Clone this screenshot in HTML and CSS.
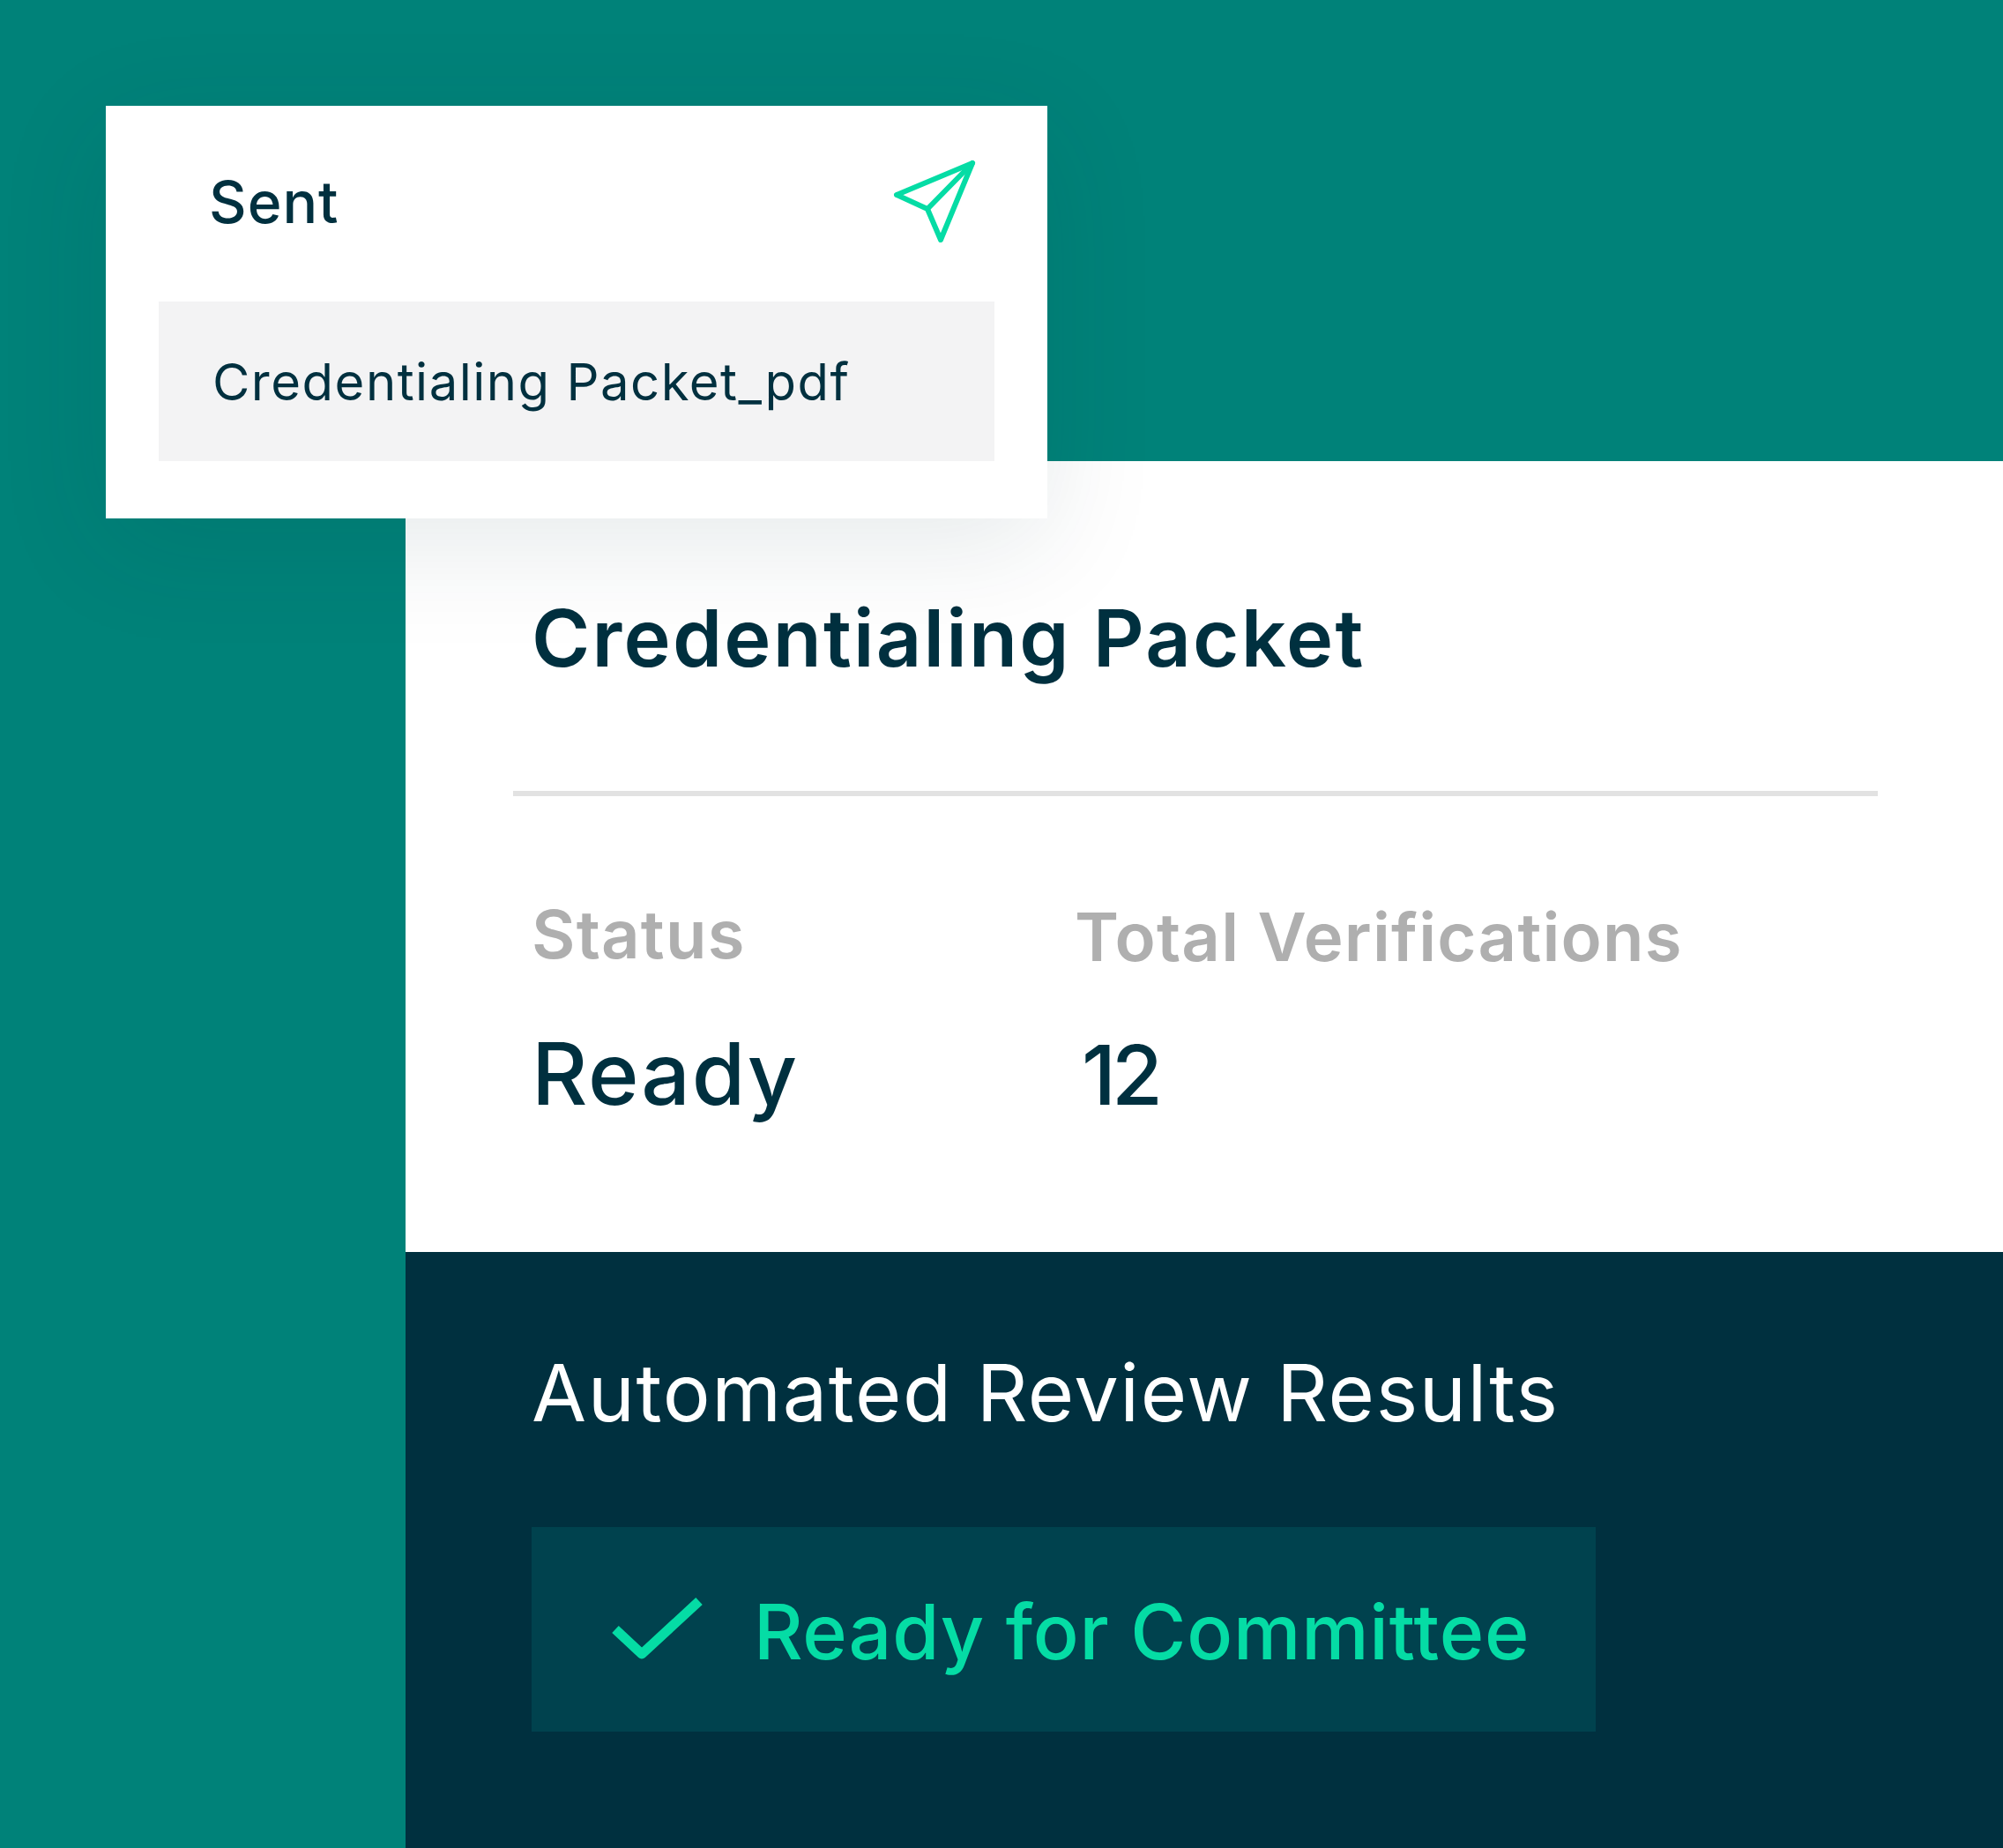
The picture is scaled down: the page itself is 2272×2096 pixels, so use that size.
FILE: index.html
```html
<!DOCTYPE html>
<html lang="en">
<head>
  <meta charset="UTF-8" />
  <title>Credentialing Packet</title>
  <link rel="stylesheet" href="styles.css">
</head>
<body>

  <!-- Sent popup, lies over the panel -->
  <div class="sent-card">
    <div class="sent-head">
      <span class="sent-title">Sent</span>
      <svg class="sent-icon" viewBox="0 0 100 100" fill="none" stroke="#05dca5" stroke-width="6" stroke-linejoin="round" stroke-linecap="round">
        <path d="M94 10 8 46 43 62 58 97Z" />
        <path d="M43 62 94 10" />
      </svg>
    </div>
    <div class="sent-file">Credentialing Packet_pdf</div>
  </div>

  <div class="panel">
    <div class="packet">
      <h1 class="packet-title">Credentialing Packet</h1>
      <div class="divider"></div>
      <div class="stats">
        <div class="stat stat-status">
          <div class="stat-label">Status</div>
          <div class="stat-value">Ready</div>
        </div>
        <div class="stat stat-total">
          <div class="stat-label">Total Verifications</div>
          <div class="stat-value">12</div>
        </div>
      </div>
    </div>

    <div class="review">
      <h2 class="review-title">Automated Review Results</h2>
      <div class="review-badge">
        <svg class="check-icon" viewBox="0 0 110 80" fill="none" stroke="#05dca5" stroke-width="11" stroke-linejoin="round">
          <path d="M8 37 38 65 103 5" />
        </svg>
        <span class="badge-text">Ready for Committee</span>
      </div>
    </div>
  </div>

</body>
</html>
```

FILE: styles.css
```css
body {
  margin: 0;
  height: 2096px;
  overflow: hidden;
  background-color: #008279;
  font-family: Inter, "Noto Sans", sans-serif;
  color: #00303f;
  position: relative;
}

/* Popup */
.sent-card {
  position: absolute;
  top: 120px;
  left: 120px;
  width: 1068px;
  height: 468px;
  box-sizing: border-box;
  padding: 0 60px;
  background: white;
  box-shadow: 0 30px 120px rgba(0, 48, 63, 0.1);
  z-index: 10;
}

.sent-head {
  height: 222px;
  display: flex;
  justify-content: space-between;
  align-items: flex-start;
}

.sent-title {
  margin: 76px 0 0 57px;
  font-size: 66px;
  font-weight: 500;
  line-height: 1;
  letter-spacing: 1px;
}

.sent-icon {
  width: 100px;
  height: 100px;
  margin: 55px 19px 0 0;
}

.sent-file {
  height: 181px;
  display: flex;
  align-items: center;
  padding-left: 61px;
  background: #f3f3f4;
  font-size: 58px;
  letter-spacing: 1.5px;
}

/* Panel */
.panel {
  margin-left: 460px;
  padding-top: 523px;
}

.packet {
  height: 897px;
  box-sizing: border-box;
  padding-top: 151px;
  background: white;
}

.packet-title {
  margin: 0 0 0 143px;
  font-size: 90px;
  font-weight: 600;
  line-height: 100px;
  letter-spacing: 2.2px;
}

.divider {
  width: 1548px;
  height: 6px;
  margin: 123px 0 0 122px;
  background: #e2e2e2;
}

.stats {
  display: flex;
  margin: 0 0 0 143px;
}

.stat-status {
  width: 616px;
  padding-top: 116px;
}

.stat-total {
  padding-top: 119px;
}

.stat-label {
  font-size: 76px;
  font-weight: 600;
  line-height: 80px;
  letter-spacing: 1.2px;
  color: #afafaf;
}

.stat-value {
  margin-top: 69px;
  font-size: 98px;
  font-weight: 500;
  line-height: 100px;
  letter-spacing: 1.8px;
}

.stat-total .stat-value {
  margin-left: 8px;
  margin-top: 67px;
  font-size: 94px;
  letter-spacing: -5px;
}

/* Review */
.review {
  height: 676px;
  box-sizing: border-box;
  padding: 110px 0 0 143px;
  background: #00303f;
}

.review-title {
  margin: 0;
  font-size: 90px;
  font-weight: 400;
  line-height: 100px;
  letter-spacing: 1.6px;
  color: white;
}

.review-badge {
  width: 1207px;
  height: 232px;
  box-sizing: border-box;
  margin-top: 102px;
  padding-top: 6px;
  display: flex;
  align-items: center;
  background: #00424e;
}

.check-icon {
  width: 110px;
  height: 80px;
  margin: 0 0 0 87px;
}

.badge-text {
  margin-left: 55px;
  font-size: 86px;
  font-weight: 500;
  letter-spacing: 0.8px;
  color: #05dca5;
}
```
